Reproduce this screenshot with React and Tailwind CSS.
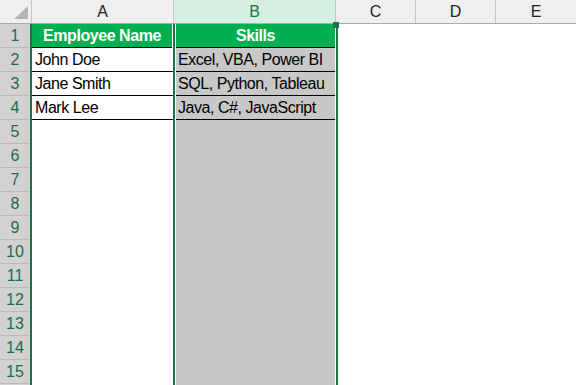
import React from "react";

const data = [
  ["John Doe", "Excel, VBA, Power BI"],
  ["Jane Smith", "SQL, Python, Tableau"],
  ["Mark Lee", "Java, C#, JavaScript"],
];

export default function App() {
  const nums = Array.from({ length: 15 }, (_, i) => i + 1);
  return (
    <div
      className="relative w-[576px] h-[385px] overflow-hidden bg-white text-[16px] tracking-[-0.45px] text-black"
      style={{ fontFamily: '"Liberation Sans", Arial, sans-serif' }}
    >
      {/* column headers */}
      <div className="flex h-[24px] border-b border-[#ababab] bg-[#efefef] tracking-normal">
        <div className="relative w-[32px] border-r border-[#c6c6c6]">
          <svg className="absolute left-0 top-0" width="31" height="23" viewBox="0 0 31 23">
            <polygon points="28,6 28,19 14,19" fill="#b5b5b5" />
          </svg>
        </div>
        <div className="w-[142px] border-r border-[#c6c6c6] flex items-center justify-center pt-[1px] text-[#222]">A</div>
        <div className="w-[162px] border-r border-[#c6c6c6] bg-[#d3f0e0] flex items-center justify-center pt-[1px] text-[#217346]">B</div>
        <div className="w-[80px] border-r border-[#c6c6c6] flex items-center justify-center pt-[1px] text-[#222]">C</div>
        <div className="w-[80px] border-r border-[#c6c6c6] flex items-center justify-center pt-[1px] text-[#222]">D</div>
        <div className="flex-1 flex items-center justify-center pt-[1px] text-[#222]">E</div>
      </div>

      {/* body */}
      <div className="flex">
        {/* row headers */}
        <div className="w-[32px] border-r-2 border-[#217346] bg-[#d2d2d2] flex flex-col tracking-normal">
          {nums.map((n) => (
            <div
              key={n}
              className="h-[24px] border-b border-[#bababa] flex items-center justify-center pt-[1px] text-[#1d6b47]"
            >
              {n}
            </div>
          ))}
        </div>

        {/* column A */}
        <div className="w-[141px] flex flex-col">
          <div className="h-[24px] border-b border-black bg-[#00b050] mr-[1px] flex items-center justify-center pt-[1px] font-bold text-white">
            Employee Name
          </div>
          {data.map(([name]) => (
            <div key={name} className="h-[24px] border-b border-black flex items-center pt-[1px] pl-[3px]">
              {name}
            </div>
          ))}
        </div>

        {/* column B (selected) */}
        <div className="w-[165px] h-[361px] border-x-2 border-[#217346] bg-white px-[1px]">
          <div className="h-full bg-[#c8c8c8] flex flex-col">
            <div className="h-[24px] border-b border-black bg-[#00b050] flex items-center justify-center pt-[1px] font-bold text-white">
              Skills
            </div>
            {data.map(([name, skills]) => (
              <div key={name} className="h-[24px] border-b border-black flex items-center pt-[1px] pl-[2px] whitespace-nowrap">
                {skills}
              </div>
            ))}
          </div>
        </div>

        <div className="flex-1" />
      </div>

      {/* fill handle */}
      <div className="absolute left-[333px] top-[22px] w-[6px] h-[6px] bg-[#217346]" />
    </div>
  );
}
